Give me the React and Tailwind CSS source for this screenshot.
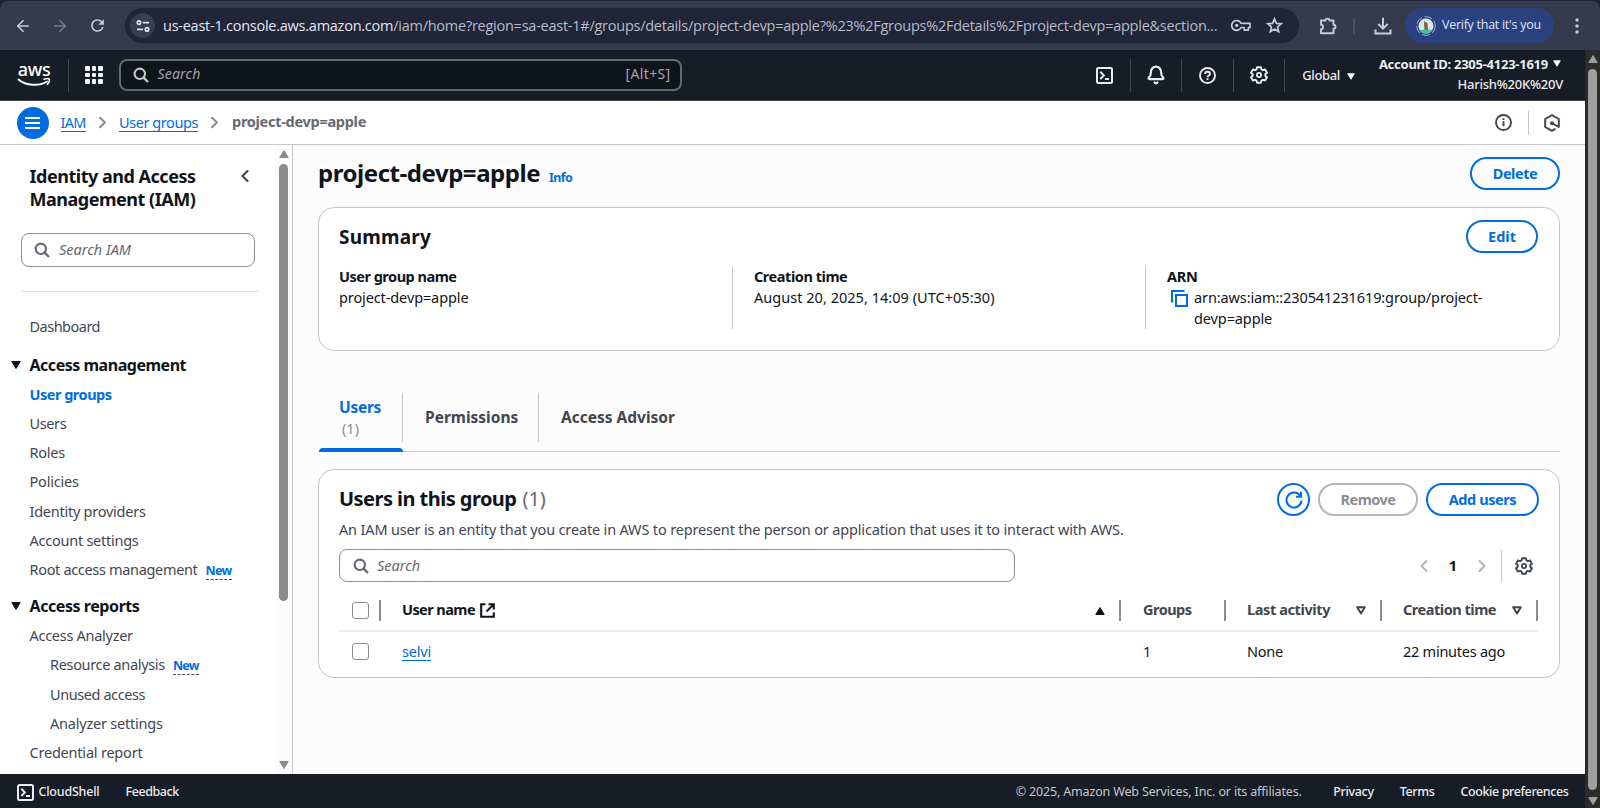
import { ArrowLeft, ArrowRight, Bell, ChevronLeft, ChevronRight } from "lucide-react";
import { MdRefresh } from "react-icons/md";

function SearchIcon({ className }) {
  return (
    <svg viewBox="0 0 16 16" fill="none" stroke="currentColor" strokeWidth="2.1" className={`size-[16px] shrink-0 ${className}`}>
      <circle cx="6.8" cy="6.8" r="5.2" />
      <path d="M10.6 10.6 15 15" strokeWidth="2.400" />
    </svg>
  );
}

function GearIcon({ className }) {
  return (
    <svg viewBox="0 0 18 18" fill="none" stroke="currentColor" strokeWidth="1.9" strokeLinejoin="round" className={className}>
      <path d="M7.100 1.200h3.800l.6 2.300 1.300.7 2.300-.7 1.900 3.200-1.700 1.600v1.400l1.700 1.600-1.900 3.200-2.300-.7-1.300.7-.6 2.300H7.100l-.6-2.300-1.300-.7-2.300.7L1 11.300l1.700-1.600V8.300L1 6.700l1.900-3.200 2.300.7 1.300-.7z" />
      <circle cx="9" cy="9" r="2.100" strokeWidth="1.800" />
    </svg>
  );
}

function InfoIcon({ className }) {
  return (
    <svg viewBox="0 0 17 17" fill="none" stroke="currentColor" strokeWidth="1.900" className={className}>
      <circle cx="8.500" cy="8.500" r="7.500" />
      <path d="M8.500 7.300v5M8.500 4.300v1.800" />
    </svg>
  );
}

function TerminalIcon({ className }) {
  return (
    <svg viewBox="0 0 17 17" fill="none" stroke="currentColor" strokeWidth="2" className={className}>
      <rect x="1" y="1" width="15" height="15" rx="1.5" />
      <path d="M4.300 4.800 7.800 8.400 4.300 12M9 12h4" />
    </svg>
  );
}

function HelpIcon({ className }) {
  return (
    <svg viewBox="0 0 17 17" fill="none" stroke="currentColor" strokeWidth="1.900" className={className}>
      <circle cx="8.500" cy="8.500" r="7.500" />
      <path d="M6 7.100c0-1.500 1.100-2.400 2.500-2.400S11 5.600 11 6.900c0 1.500-2.500 1.600-2.500 3.300" />
      <path d="M8.500 11.300v1.800" />
    </svg>
  );
}

function HexIcon({ className }) {
  return (
    <svg viewBox="0 0 16 18" fill="none" stroke="currentColor" strokeWidth="2" strokeLinejoin="round" className={className}>
      <path d="M11.500 14.700 8 16.800 1.200 13V5L8 1.200 14.800 5v8L8.500 9.500" />
      <circle cx="8" cy="9.200" r="2" fill="currentColor" stroke="none" />
    </svg>
  );
}

function KeyIcon({ className }) {
  return (
    <svg viewBox="0 0 20 13" fill="none" stroke="currentColor" strokeWidth="1.700" strokeLinejoin="round" className={className}>
      <path d="M10 4.300h9v4.200h-1.600v2.600h-4.200V8.500H10a4.900 4.900 0 1 1 0-4.200z" />
      <circle cx="5.700" cy="6.400" r="1.700" fill="currentColor" stroke="none" />
    </svg>
  );
}

function StarIcon({ className }) {
  return (
    <svg viewBox="0 0 16 16" fill="none" stroke="currentColor" strokeWidth="1.600" className={className}>
      <path d="M8 1.800l1.800 4.200 4.500.4-3.400 3 1 4.400L8 11.400l-3.900 2.400 1-4.400-3.400-3 4.500-.4z" />
    </svg>
  );
}

function PuzzleIcon({ className }) {
  return (
    <svg viewBox="0 0 18 18" fill="none" stroke="currentColor" strokeWidth="1.900" strokeLinejoin="round" className={className}>
      <path d="M2 3.500h4.500C6.500 1 10.500 1 10.500 3.500H14.500v4.200c2.600 0 2.600 4 0 4v4.500H2v-4c2.600 0 2.600-4.500 0-4.500z" />
    </svg>
  );
}

function DownloadIcon({ className }) {
  return (
    <svg viewBox="0 0 18 18" fill="none" stroke="currentColor" strokeWidth="2" className={className}>
      <path d="M9 .8v10.400M4.300 7 9 11.700 13.700 7M1.500 12.500v4h15v-4" />
    </svg>
  );
}

function Caret({ className }) {
  return (
    <svg viewBox="0 0 10 8" className={className}>
      <path d="M.8.500h8.400L5 7.500z" fill="currentColor" stroke="currentColor" strokeLinejoin="round" />
    </svg>
  );
}

function HollowCaret() {
  return (
    <svg viewBox="0 0 10 9" className="h-[9px] w-[10px] shrink-0">
      <path d="M1.200 1.200h7.600L5 7.400z" fill="none" stroke="currentColor" strokeWidth="2" strokeLinejoin="round" />
    </svg>
  );
}

function RefreshIcon() {
  return (
    <svg viewBox="0 0 18 18" fill="none" stroke="currentColor" strokeWidth="2" className="size-[18px]">
      <path d="M16.500 9.500A7.500 7.500 0 1 1 15.300 5" />
      <path d="M16 .8v5h-5" />
    </svg>
  );
}

function CopyIcon() {
  return (
    <svg viewBox="0 0 17 17" fill="none" stroke="currentColor" strokeWidth="2" className="mt-[3px] h-[17px] w-[17px] shrink-0 text-[#006ce0]">
      <path d="M1 12.500V1h12.500" />
      <rect x="5" y="5" width="11" height="11" />
    </svg>
  );
}

function ExternalIcon() {
  return (
    <svg viewBox="0 0 15 15" fill="none" stroke="currentColor" strokeWidth="2.100" className="size-[15px]">
      <path d="M5.500 1.200H1.200v12.600h12.600V9.500" />
      <path d="M8.500 1.200h5.300v5.300M13.500 1.500 6.500 8.500" />
    </svg>
  );
}

function SiteInfoIcon() {
  return (
    <svg viewBox="0 0 14 12" fill="none" stroke="#dcdff0" strokeWidth="1.700" className="h-[12px] w-[14px]">
      <circle cx="3" cy="2.600" r="1.700" />
      <path d="M6.800 2.600H13M1 9.400h6" />
      <circle cx="11" cy="9.400" r="1.700" />
    </svg>
  );
}

function BrowserBar() {
  return (
    <div className="flex h-[50px] shrink-0 items-center rounded-t-lg border-t border-[#1d2038] bg-[#363a4e] font-['Open_Sans',sans-serif] text-[#c9cbdc]">
      <ArrowLeft className="ml-[14px] size-[18px]" strokeWidth={2.2} />
      <ArrowRight className="ml-[19px] size-[18px] text-[#777b90]" strokeWidth={2.2} />
      <MdRefresh className="ml-[19px] size-[19px]" />
      <div className="ml-[18px] flex h-[35px] w-[1174px] items-center rounded-full bg-[#202538]">
        <div className="ml-[5px] flex size-[25px] items-center justify-center rounded-full bg-[#383d52]">
          <SiteInfoIcon />
        </div>
        <div className="ml-[8px] w-[1058px] text-[14.5px] tracking-[-0.25px] whitespace-nowrap text-[#b9bbca]">
          <span className="text-[#e4e6f3]">us-east-1.console.aws.amazon.com</span>
          /iam/home?region=sa-east-1#/groups/details/project-devp=apple?%23%2Fgroups%2Fdetails%2Fproject-devp=apple&amp;section...
        </div>
        <KeyIcon className="ml-[10px] h-[13px] w-[20px]" />
        <StarIcon className="ml-[15px] size-[17px]" />
      </div>
      <PuzzleIcon className="ml-[20px] size-[18px]" />
      <div className="ml-[16px] h-4 w-[2px] bg-[#4a4e64]" />
      <DownloadIcon className="ml-[19px] size-[18px]" />
      <div className="ml-[13px] flex h-[35px] w-[149px] items-center rounded-full bg-[#2c4280] text-[#dbe3fc]">
        <svg viewBox="0 0 20 20" className="ml-[11px] size-[20px]">
          <circle cx="10" cy="10" r="9.300" fill="none" stroke="#9fb0dc" strokeDasharray="8 2.500" />
          <circle cx="10" cy="10" r="7.500" fill="#dfe6e8" />
          <path d="M3.500 13.800h13A7.500 7.500 0 0 1 3.500 13.800z" fill="#35c9a5" />
          <path d="M8 4.500l1.200 2 1.800-.3.800 3.300.2 4.500H8.600l-.6-5z" fill="#7d6a45" />
        </svg>
        <span className="ml-[6px] text-[12.5px] tracking-[-0.27px] whitespace-nowrap">Verify that it's you</span>
      </div>
      <svg viewBox="0 0 4 16" className="ml-[21px] h-[16px] w-[4px]" fill="currentColor">
        <circle cx="2" cy="2" r="1.700" />
        <circle cx="2" cy="8" r="1.700" />
        <circle cx="2" cy="14" r="1.700" />
      </svg>
    </div>
  );
}

function AwsLogo() {
  return (
    <div className="ml-[17px] flex w-[34px] flex-col items-center text-white">
      <span className="h-[15px] text-[18px] leading-[12px] font-medium tracking-[-0.3px]">aws</span>
      <svg viewBox="0 0 34 9" fill="none" stroke="currentColor" className="h-[9px] w-[34px]">
        <path d="M1.500 1.500C9 8 22 8.500 30 3.500" strokeWidth="2" strokeLinecap="round" />
        <path d="M27 1.300c2-.7 4.500-.8 5.200-.2s-.1 3.400-1.700 5" strokeWidth="1.500" strokeLinecap="round" />
      </svg>
    </div>
  );
}

function NavIcon({ children }) {
  return (
    <div className="flex h-[33px] w-[51.5px] items-center justify-center border-r border-[#424650]">{children}</div>
  );
}

function TopNav() {
  const cells = [0, 1, 2, 3, 4, 5, 6, 7, 8];
  return (
    <div className="flex h-[51px] shrink-0 items-center border-b border-[#424650] bg-[#161d26] text-[#ebebf0]">
      <AwsLogo />
      <div className="ml-[17px] h-[33px] w-px bg-[#424650]" />
      <div className="ml-[16px] grid grid-cols-3 gap-[2px]">
        {cells.map((c) => (
          <div key={c} className="size-[4.500px] rounded-[1px] bg-[#f3f3f7]" />
        ))}
      </div>
      <div className="ml-[16px] flex h-[32px] w-[563px] items-center rounded-lg border-2 border-[#656871] bg-[#0f141a] text-[14px] leading-[26px] text-[#a4a4ad]">
        <SearchIcon className="ml-[12px] text-[#c6c6cd]" />
        <span className="mb-[2px] ml-[9px] tracking-[0.2px] italic">Search</span>
        <span className="mb-[2px] ml-auto pr-[9px] tracking-[0.35px]">[Alt+S]</span>
      </div>
      <div className="ml-auto flex items-center">
        <NavIcon>
          <TerminalIcon className="size-[17px]" />
        </NavIcon>
        <NavIcon>
          <Bell className="size-[20px]" strokeWidth={2.6} />
        </NavIcon>
        <NavIcon>
          <HelpIcon className="size-[17px]" />
        </NavIcon>
        <NavIcon>
          <GearIcon className="size-[18px]" />
        </NavIcon>
        <div className="mt-[2px] ml-[17px] flex items-center gap-[7px] text-[13px] font-medium tracking-[-0.35px]">
          Global
          <Caret className="h-[7px] w-[8px] text-white" />
        </div>
      </div>
      <div className="mr-[22px] mb-[3px] ml-[24px] flex w-[184px] flex-col items-end text-[13px] leading-[20px] whitespace-nowrap">
        <div className="flex items-center gap-[5px] font-bold tracking-[-0.25px]">
          Account ID: 2305-4123-1619
          <Caret className="mr-[2px] h-[7px] w-[8px] text-white" />
        </div>
        <div className="font-medium tracking-[-0.23px]">Harish%20K%20V</div>
      </div>
    </div>
  );
}

function BreadcrumbBar() {
  return (
    <div className="flex h-[44px] shrink-0 items-center border-b border-[#c6c6cd] bg-white text-[14.5px] whitespace-nowrap">
      <div className="ml-[16.5px] flex size-[32px] items-center justify-center rounded-full bg-[#006ce0]">
        <div className="flex w-[15px] flex-col gap-[3px]">
          <div className="h-[2px] bg-white" />
          <div className="h-[2px] bg-white" />
          <div className="h-[2px] bg-white" />
        </div>
      </div>
      <a className="ml-[12px] w-[25px] border-b border-[#006ce0] leading-[18px] tracking-[-0.7px] text-[#006ce0]">IAM</a>
      <ChevronRight className="ml-[7.5px] size-[19px] text-[#8c8c94]" strokeWidth={2.6} />
      <a className="ml-[7px] w-[79px] border-b border-[#006ce0] leading-[18px] tracking-[-0.43px] text-[#006ce0]">User groups</a>
      <ChevronRight className="ml-[7px] size-[19px] text-[#8c8c94]" strokeWidth={2.6} />
      <span className="mb-px ml-[8px] font-bold tracking-[-0.28px] text-[#656871]">project-devp=apple</span>
      <InfoIcon className="ml-auto size-[17px] text-[#424650]" />
      <div className="mx-[15.5px] h-6 w-px bg-[#c6c6cd]" />
      <HexIcon className="mr-[25px] h-[18px] w-[16px] text-[#424650]" />
    </div>
  );
}

function NavItem({ children, className }) {
  return <div className={`flex h-[29.200px] items-center ${className}`}>{children}</div>;
}

function NavHeading({ children, className }) {
  return (
    <div className={`-ml-[18.5px] flex items-center gap-[8.5px] text-[16px] font-bold text-[#0f141a] ${className}`}>
      <Caret className="h-[8px] w-[10px]" />
      {children}
    </div>
  );
}

function NewTag() {
  return (
    <span className="mt-[2px] ml-[8px] border-b border-dashed border-[#424650] text-[12.5px] leading-[17px] font-bold tracking-[-0.69px] text-[#006ce0]">
      New
    </span>
  );
}

function Sidebar() {
  return (
    <div className="flex w-[293px] shrink-0 border-r border-[#c6c6cd] bg-white text-[14.5px] whitespace-nowrap text-[#424650]">
      <div className="min-w-0 flex-1 overflow-hidden">
        <div className="flex pt-[20px] pl-[29.5px]">
          <h2 className="w-[212px] text-[18px] leading-[23px] font-bold tracking-[-0.48px] text-[#0f141a]">
            Identity and Access
            <br />
            Management (IAM)
          </h2>
          <ChevronLeft className="mt-px -ml-[7px] size-[20px] text-[#424650]" strokeWidth={2.6} />
        </div>
        <div className="mt-[22px] ml-[21px] flex h-[34px] w-[234px] items-center rounded-lg border border-[#8c8c94] text-[#656871]">
          <SearchIcon className="ml-[12px]" />
          <span className="ml-[9px] italic">Search IAM</span>
        </div>
        <div className="mt-[24px] ml-[21px] h-px w-[238px] bg-[#dedee3]" />
        <div className="pt-[20px] pl-[29.5px]">
          <NavItem className="tracking-[-0.51px]">Dashboard</NavItem>
          <NavHeading className="mt-[8px] h-[31px] tracking-[-0.48px]">Access management</NavHeading>
          <NavItem className="font-bold tracking-[-0.49px] text-[#006ce0]">User groups</NavItem>
          <NavItem className="tracking-[-0.38px]">Users</NavItem>
          <NavItem className="tracking-[-0.25px]">Roles</NavItem>
          <NavItem className="tracking-[-0.2px]">Policies</NavItem>
          <NavItem className="tracking-[-0.25px]">Identity providers</NavItem>
          <NavItem className="tracking-[-0.25px]">Account settings</NavItem>
          <NavItem className="tracking-[-0.33px]">
            Root access management
            <NewTag />
          </NavItem>
          <NavHeading className="mt-[6px] h-[31px] tracking-[-0.43px]">Access reports</NavHeading>
          <NavItem className="tracking-[-0.28px]">Access Analyzer</NavItem>
          <NavItem className="pl-[20.5px] tracking-[-0.33px]">
            Resource analysis
            <NewTag />
          </NavItem>
          <NavItem className="pl-[20.5px] tracking-[-0.42px]">Unused access</NavItem>
          <NavItem className="pl-[20.500px] tracking-[-0.22px]">Analyzer settings</NavItem>
          <NavItem className="tracking-[-0.21px]">Credential report</NavItem>
        </div>
      </div>
      <div className="flex w-[17px] flex-col items-center bg-[#fcfcfc] text-[#8b8b8b]">
        <Caret className="mt-[5px] h-[8px] w-[10px] shrink-0 rotate-180" />
        <div className="mt-[6px] h-[437px] w-[9px] shrink-0 rounded-full bg-[#8b8b8b]" />
        <Caret className="mt-auto mb-[5px] h-[8px] w-[10px] shrink-0" />
      </div>
    </div>
  );
}

function Button({ children, className }) {
  return (
    <button className={`flex h-[33px] shrink-0 items-center justify-center rounded-full border-2 text-[14.5px] font-bold ${className}`}>
      {children}
    </button>
  );
}

function SummaryCard() {
  return (
    <section className="mt-[17px] h-[144px] rounded-2xl border border-[#c6c6cd] bg-white px-[20px] pt-[12px]">
      <div className="flex h-[33px] items-center justify-between">
        <h2 className="mt-px text-[19px] font-bold tracking-[0.2px]">Summary</h2>
        <Button className="mr-px w-[72px] border-[#006ce0] text-[#006ce0]">Edit</Button>
      </div>
      <div className="mt-[13px] flex h-[63px] leading-[21px] whitespace-nowrap">
        <div className="w-[394px] border-r border-[#c6c6cd]">
          <div className="font-bold tracking-[-0.49px]">User group name</div>
          <div className="tracking-[-0.11px]">project-devp=apple</div>
        </div>
        <div className="w-[413px] border-r border-[#c6c6cd] pl-[21px]">
          <div className="font-bold tracking-[-0.45px]">Creation time</div>
          <div className="tracking-[0.03px]">August 20, 2025, 14:09 (UTC+05:30)</div>
        </div>
        <div className="pl-[21px]">
          <div className="font-bold tracking-[-0.3px]">ARN</div>
          <div className="flex gap-[6px] pl-[4px] tracking-[-0.11px]">
            <CopyIcon />
            <div>
              arn:aws:iam::230541231619:group/project-
              <br />
              devp=apple
            </div>
          </div>
        </div>
      </div>
    </section>
  );
}

function Tabs() {
  return (
    <div className="mt-[36px] ml-px flex h-[65px] border-b border-[#c6c6cd] text-[15.5px] font-bold text-[#424650]">
      <div className="flex h-[65px] w-[84px] flex-col justify-between text-[#006ce0]">
        <div className="mt-[6px] flex h-[49px] flex-col justify-center border-r border-[#c6c6cd] pl-[20px] leading-[20.5px]">
          <span className="tracking-[-0.29px]">Users</span>
          <span className="pl-[3px] text-[14.5px] font-normal text-[#8c8c94]">(1)</span>
        </div>
        <div className="h-[4px] w-[84px] rounded-t-sm bg-[#006ce0]" />
      </div>
      <div className="mt-[6px] flex h-[49px] w-[136px] items-center border-r border-[#c6c6cd] pl-[22px]">Permissions</div>
      <div className="mt-[6px] flex h-[49px] items-center pl-[22px]">Access Advisor</div>
    </div>
  );
}

function Checkbox() {
  return <div className="size-[17px] shrink-0 rounded-[3px] border-[1.500px] border-[#8c8c94] bg-white" />;
}

function ColumnRule() {
  return <div className="ml-auto h-[21px] w-[2px] bg-[#8c8c94]" />;
}

function UsersCard() {
  return (
    <section className="mt-[17px] h-[209px] rounded-2xl border border-[#c6c6cd] bg-white px-[20px] pt-[13px] whitespace-nowrap">
      <div className="flex h-[33px] items-center">
        <h2 className="mb-[2px] text-[20px] font-bold tracking-[-0.54px]">Users in this group</h2>
        <span className="mb-[2px] ml-[6px] text-[20px] text-[#656871]">(1)</span>
        <Button className="ml-auto w-[33px] border-[#006ce0] text-[#006ce0]">
          <RefreshIcon />
        </Button>
        <Button className="ml-[8px] w-[100px] border-[#b4b4bb] tracking-[-0.5px] text-[#8c8c94]">Remove</Button>
        <Button className="ml-[8px] w-[113px] border-[#006ce0] tracking-[-0.42px] text-[#006ce0]">Add users</Button>
      </div>
      <p className="mt-[3px] leading-[20px] tracking-[-0.16px] text-[#424650]">
        An IAM user is an entity that you create in AWS to represent the person or application that uses it to interact with AWS.
      </p>
      <div className="mt-[10px] flex h-[33px] items-center">
        <div className="flex h-[33px] w-[676px] items-center rounded-lg border border-[#8c8c94] text-[#656871]">
          <SearchIcon className="ml-[13px]" />
          <span className="ml-[8px] italic">Search</span>
        </div>
        <ChevronLeft className="mt-px ml-auto size-[20px] text-[#b4b4bb]" strokeWidth={2.5} />
        <span className="w-[38px] text-center font-bold">1</span>
        <ChevronRight className="mt-px size-[20px] text-[#b4b4bb]" strokeWidth={2.5} />
        <div className="ml-[9px] h-[32px] w-px bg-[#c6c6cd]" />
        <GearIcon className="mt-px mr-[6px] ml-[13px] size-[18px] text-[#424650]" />
      </div>
      <div className="mt-[8px] grid h-[42px] grid-cols-[42px_740px_105px_156px_156px] border-b-2 border-[#ebebf0] font-bold text-[#424650]">
        <div className="flex items-center pl-[13px]">
          <Checkbox />
          <ColumnRule />
        </div>
        <div className="flex items-center pl-[21px] tracking-[-0.56px] text-[#0f141a]">
          User name
          <span className="ml-[5px]">
            <ExternalIcon />
          </span>
          <Caret className="mt-[2px] ml-auto h-[8px] w-[10px] rotate-180" />
          <div className="ml-[14px] h-[21px] w-[2px] bg-[#8c8c94]" />
        </div>
        <div className="flex items-center pl-[22px] tracking-[-0.52px]">
          Groups
          <ColumnRule />
        </div>
        <div className="flex items-center pl-[21px]">
          <span className="flex-1 tracking-[-0.39px]">Last activity</span>
          <HollowCaret />
          <div className="ml-[14px] h-[21px] w-[2px] bg-[#8c8c94]" />
        </div>
        <div className="flex items-center pl-[21px]">
          <span className="flex-1 tracking-[-0.47px]">Creation time</span>
          <HollowCaret />
          <div className="ml-[14px] h-[21px] w-[2px] bg-[#8c8c94]" />
        </div>
      </div>
      <div className="grid h-[39px] grid-cols-[42px_740px_105px_156px_156px] items-center">
        <div className="pl-[13px]">
          <Checkbox />
        </div>
        <div className="flex pl-[21px]">
          <a className="border-b border-[#006ce0] leading-[18px] tracking-[-0.19px] text-[#006ce0]">selvi</a>
        </div>
        <div className="pl-[22px]">1</div>
        <div className="pl-[21px] tracking-[-0.25px]">None</div>
        <div className="pl-[21px] tracking-[-0.25px]">22 minutes ago</div>
      </div>
    </section>
  );
}

function Footer() {
  return (
    <footer className="flex h-[34px] shrink-0 items-center bg-[#161d26] pt-[2px] text-[12.5px] font-medium whitespace-nowrap text-[#ebebf0]">
      <TerminalIcon className="ml-[16.500px] size-[17px]" />
      <span className="ml-[5px] tracking-[-0.22px]">CloudShell</span>
      <span className="ml-[26px] tracking-[-0.42px]">Feedback</span>
      <span className="ml-auto font-normal tracking-[-0.16px] text-[#c6c6cd]">© 2025, Amazon Web Services, Inc. or its affiliates.</span>
      <span className="ml-[31.500px] tracking-[-0.32px]">Privacy</span>
      <span className="ml-[26px] tracking-[-0.35px]">Terms</span>
      <span className="mr-[16.500px] ml-[26px] tracking-[-0.39px]">Cookie preferences</span>
    </footer>
  );
}

export default function App() {
  return (
    <div className="flex h-[808px] w-[1600px] flex-col overflow-hidden bg-[#1d2038] font-['Noto_Sans',sans-serif] text-[#0f141a]">
      <BrowserBar />
      <div className="flex min-h-0 flex-1">
        <div className="flex w-[1585px] shrink-0 flex-col">
          <TopNav />
          <BreadcrumbBar />
          <div className="flex min-h-0 flex-1">
            <Sidebar />
            <main className="flex-1 bg-[#fcfcfc] pt-[12px] pr-[25px] pl-[25px] text-[14.5px]">
              <div className="flex h-[33px] items-center">
                <h1 className="mb-px text-[24px] font-bold tracking-[-0.45px]">project-devp=apple</h1>
                <a className="mt-[9px] ml-[9px] text-[12.5px] font-bold tracking-[-0.66px] text-[#006ce0]">Info</a>
                <Button className="ml-auto w-[90px] border-[#006ce0] tracking-[-0.45px] text-[#006ce0]">Delete</Button>
              </div>
              <SummaryCard />
              <Tabs />
              <UsersCard />
            </main>
          </div>
          <Footer />
        </div>
        <div className="flex flex-1 flex-col items-center bg-[#2b2b2b] text-[#9f9f9f]">
          <Caret className="mt-[5px] h-[8px] w-[10px] shrink-0 rotate-180" />
          <div className="mt-[6px] w-[9px] flex-1 rounded-full bg-[#9f9f9f]" />
          <Caret className="mt-[7px] mb-[3px] h-[8px] w-[10px] shrink-0" />
        </div>
      </div>
    </div>
  );
}
